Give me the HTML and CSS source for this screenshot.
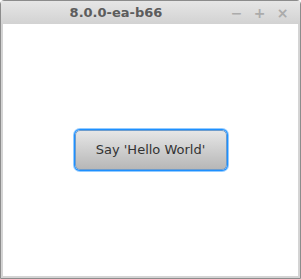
FILE: index.html
```html
<!DOCTYPE html>
<html lang="en">
<head>
  <meta charset="UTF-8">
  <title>8.0.0-ea-b66</title>
  <link rel="stylesheet" href="styles.css">
</head>
<body>
  <div class="window">
    <!-- Title bar -->
    <div class="titlebar">
      <span class="title">8.0.0-ea-b66</span>
      <div class="controls">
        <span class="ctl">&minus;</span>
        <span class="ctl">+</span>
        <span class="ctl">&times;</span>
      </div>
    </div>
    <!-- Scene -->
    <div class="scene">
      <button class="say-btn" type="button">Say 'Hello World'</button>
    </div>
  </div>
</body>
</html>
```

FILE: styles.css
```css
/* Base */
body {
  margin: 0;
  background: #fff;
  font-family: "DejaVu Sans", sans-serif;
}
.window {
  width: 301px;
  height: 279px;
  box-sizing: border-box;
  border: 1px solid #8c8c8c;
  border-radius: 4px 4px 0 0;
  background: #d4d4d4;
  display: flex;
  flex-direction: column;
  padding: 0 2px 2px;
}

/* Title bar */
.titlebar {
  height: 23px;
  display: flex;
  align-items: center;
  position: relative;
  background: linear-gradient(#e6e6e6, #d2d2d2);
  margin: 0 -2px;
  padding: 0 2px;
}
.title {
  position: absolute;
  left: 0;
  width: 230px;
  text-align: center;
  font-weight: bold;
  font-size: 13px;
  color: #5c5c5c;
}
.controls {
  margin-left: auto;
  display: flex;
  gap: 10px;
  padding-right: 9px;
}
.ctl {
  width: 13px;
  text-align: center;
  font-size: 14px;
  font-weight: bold;
  color: #ababab;
}

/* Scene */
.scene {
  flex: 1;
  background: #fff;
  display: flex;
  align-items: center;
  justify-content: center;
  padding-bottom: 1px;
}
.say-btn {
  width: 152px;
  height: 40px;
  border: 1px solid #6e9ccc;
  border-radius: 5px;
  box-shadow: 0 0 0 1px #1e90ff, 0 0 0 2px rgba(60,160,255,0.55);
  background: linear-gradient(#e6e6e6, #b7b7b7);
  font-family: "DejaVu Sans", sans-serif;
  font-size: 13px;
  color: #333;
}
```
